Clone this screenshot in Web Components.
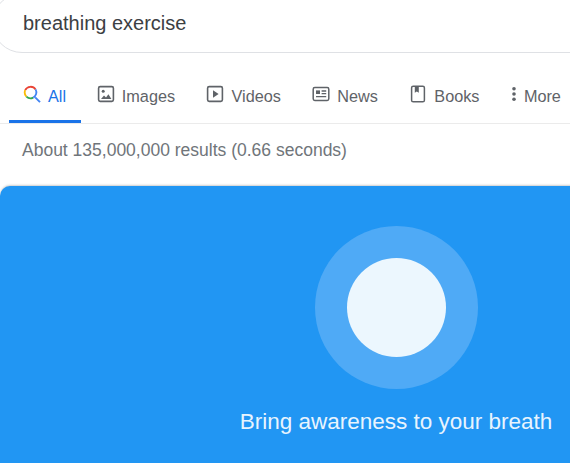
<!DOCTYPE html>
<html>
<head>
<meta charset="utf-8">
<title>breathing exercise</title>
<style>
  html, body { margin: 0; padding: 0; overflow: hidden; background: #fff; }
  body { width: 570px; height: 463px; font-family: "Liberation Sans", Arial, sans-serif; }
</style>
</head>
<body>
<search-box>breathing exercise</search-box>
<search-tabs>
  <search-tab active label="All">
    <svg slot="icon" width="18" height="18" viewBox="0 0 18 18">
      <path d="M12.2 12.4l4.8 4.8" stroke="#4285f4" stroke-width="1.9" fill="none"/>
      <path d="M2.2 5.2A6 6 0 0 1 12.6 4.4" stroke="#ea4335" stroke-width="1.8" fill="none"/>
      <path d="M2.2 5.2A6 6 0 0 0 3.4 11.6" stroke="#fbbc05" stroke-width="1.8" fill="none"/>
      <path d="M3.4 11.6A6 6 0 0 0 10.2 12.6" stroke="#34a853" stroke-width="1.8" fill="none"/>
      <path d="M10.2 12.6A6 6 0 0 0 12.6 4.4" stroke="#4285f4" stroke-width="1.8" fill="none"/>
    </svg>
  </search-tab>
  <search-tab label="Images">
    <svg slot="icon" width="18" height="18" viewBox="0 0 18 18">
      <rect x="1.6" y="1.6" width="14.8" height="14.8" rx="1.6" fill="none" stroke="#5f6368" stroke-width="1.6"/>
      <circle cx="6.2" cy="6.2" r="1.5" fill="#5f6368"/>
      <path d="M4 14l3-3.6 2 2.2 2.4-3.4 3 4.8z" fill="#5f6368"/>
    </svg>
  </search-tab>
  <search-tab label="Videos">
    <svg slot="icon" width="18" height="18" viewBox="0 0 18 18">
      <rect x="1.6" y="1.6" width="14.8" height="14.8" rx="1.6" fill="none" stroke="#5f6368" stroke-width="1.6"/>
      <path d="M7 5.2v7.6L12.6 9z" fill="#5f6368"/>
    </svg>
  </search-tab>
  <search-tab label="News">
    <svg slot="icon" width="18" height="18" viewBox="0 0 18 18">
      <rect x="1.2" y="2.6" width="15.6" height="12.8" rx="1.6" fill="none" stroke="#5f6368" stroke-width="1.5"/>
      <rect x="4" y="5.4" width="4" height="3.6" fill="#5f6368"/>
      <path d="M9.6 6h4.6M9.6 8.6h4.6M4 11.6h10.2" stroke="#5f6368" stroke-width="1.3" fill="none"/>
    </svg>
  </search-tab>
  <search-tab label="Books">
    <svg slot="icon" width="18" height="18" viewBox="0 0 18 18">
      <rect x="2.6" y="1.2" width="12.8" height="15.6" rx="1.6" fill="none" stroke="#5f6368" stroke-width="1.5"/>
      <path d="M5.8 1.5h4v6.3l-2-1.3-2 1.3z" fill="#5f6368"/>
    </svg>
  </search-tab>
  <search-tab label="More">
    <svg slot="icon" width="6" height="18" viewBox="0 0 6 18">
      <circle cx="3" cy="3.8" r="1.8" fill="#5f6368"/>
      <circle cx="3" cy="9" r="1.8" fill="#5f6368"/>
      <circle cx="3" cy="14.2" r="1.8" fill="#5f6368"/>
    </svg>
  </search-tab>
</search-tabs>
<result-stats>About 135,000,000 results (0.66 seconds)</result-stats>
<breath-card>Bring awareness to your breath</breath-card>

<script>
class SearchBox extends HTMLElement {
  constructor() {
    super();
    this.attachShadow({ mode: 'open' });
    this.shadowRoot.innerHTML = `
      <style>
        :host {
          display: flex;
          align-items: center;
          box-sizing: border-box;
          width: 760px;
          height: 60px;
          margin: -7px 0 0 -8px;
          padding: 0 0 0 30px;
          border: 1px solid #dfe1e5;
          border-radius: 30px;
          color: #3c4043;
          font-size: 20px;
        }
      </style>
      <slot></slot>
    `;
  }
}

class SearchTabs extends HTMLElement {
  constructor() {
    super();
    this.attachShadow({ mode: 'open' });
    this.shadowRoot.innerHTML = `
      <style>
        :host {
          display: flex;
          box-sizing: border-box;
          width: 570px;
          height: 71px;
          padding: 18px 0 0 9px;
          border-bottom: 1px solid #ebebeb;
          white-space: nowrap;
        }
      </style>
      <slot></slot>
    `;
  }
}

class SearchTab extends HTMLElement {
  constructor() {
    super();
    this.attachShadow({ mode: 'open' });
    this.shadowRoot.innerHTML = `
      <style>
        :host {
          display: flex;
          flex: none;
          align-items: flex-start;
          box-sizing: border-box;
          height: 52px;
          padding: 13px 15.6px 0 15.8px;
          gap: 7px;
          color: #5f6368;
          font-size: 16.25px;
        }
        :host([active]) {
          width: 72px;
          padding: 13px 0 0 14px;
          color: #1a73e8;
          border-bottom: 3px solid #1a73e8;
        }
        .label { line-height: 20px; margin-top: 2px; }
        ::slotted(svg) { display: block; margin-top: 1px; }
      </style>
      <slot name="icon"></slot>
      <span class="label"></span>
    `;
    this.shadowRoot.querySelector('.label').textContent = this.getAttribute('label');
  }
}

class ResultStats extends HTMLElement {
  constructor() {
    super();
    this.attachShadow({ mode: 'open' });
    this.shadowRoot.innerHTML = `
      <style>
        :host {
          display: block;
          height: 62px;
          padding: 16px 0 0 22px;
          box-sizing: border-box;
          color: #70757a;
          font-size: 17.5px;
          line-height: 20px;
          white-space: nowrap;
        }
      </style>
      <slot></slot>
    `;
  }
}

class BreathCard extends HTMLElement {
  constructor() {
    super();
    this.attachShadow({ mode: 'open' });
    this.shadowRoot.innerHTML = `
      <style>
        :host {
          display: flex;
          flex-direction: column;
          align-items: center;
          box-sizing: border-box;
          width: 792px;
          height: 300px;
          padding-top: 40px;
          background: #2196f3;
          border-radius: 10px;
          box-shadow: 0 -1px 2px rgba(60, 64, 67, .25);
        }
        .ring {
          display: flex;
          align-items: center;
          justify-content: center;
          width: 163px;
          height: 163px;
          border-radius: 50%;
          background: #4faaf6;
        }
        .dot {
          width: 99px;
          height: 99px;
          border-radius: 50%;
          background: #ecf7fe;
        }
        .caption {
          margin-top: 20px;
          color: #e8f4fe;
          font-size: 22.5px;
          line-height: 26px;
          white-space: nowrap;
        }
      </style>
      <div class="ring"><div class="dot"></div></div>
      <div class="caption"><slot></slot></div>
    `;
  }
}

customElements.define('search-box', SearchBox);
customElements.define('search-tabs', SearchTabs);
customElements.define('search-tab', SearchTab);
customElements.define('result-stats', ResultStats);
customElements.define('breath-card', BreathCard);
</script>
</body>
</html>
